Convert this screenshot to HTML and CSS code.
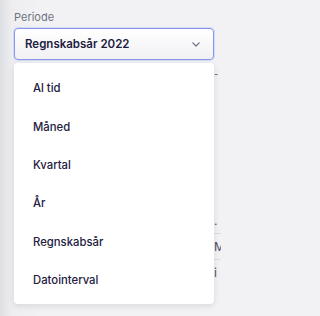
FILE: index.html
```html
<!DOCTYPE html>
<html lang="da">
<head>
<meta charset="utf-8">
<link rel="stylesheet" href="styles.css">
</head>
<body>
<div class="page">
  <div class="field">
    <div class="label">Periode</div>
    <div class="select-wrap">
      <div class="select">
        <span class="value">Regnskabsår 2022</span>
        <svg class="chev" width="8" height="5" viewBox="0 0 8 5"><path d="M0.8 0.8 L4 4 L7.2 0.8" fill="none" stroke="#6d7080" stroke-width="1.2" stroke-linecap="round" stroke-linejoin="round"/></svg>
      </div>
      <ul class="menu">
        <li class="item">Al tid</li>
        <li class="item">Måned</li>
        <li class="item">Kvartal</li>
        <li class="item">År</li>
        <li class="item">Regnskabsår</li>
        <li class="item">Datointerval</li>
      </ul>
    </div>
  </div>
  <div class="bg">
    <div class="bg-row first"><span class="bg-cell">-</span></div>
    <div class="bg-row tall"><span class="bg-cell">.</span></div>
    <div class="bg-row"><span class="bg-cell">M</span></div>
    <div class="bg-row"><span class="bg-cell">i</span></div>
  </div>
</div>
</body>
</html>
```
FILE: styles.css
```css
html, body {
  margin: 0;
  padding: 0;
}
body {
  width: 221px;
  height: 316px;
  overflow: hidden;
  font-family: Inter, "Noto Sans", sans-serif;
  background: linear-gradient(to right, #dedfe3 0px, #eeeef1 12px, #f2f2f4 40px, #f2f2f4 100%);
  color: #1d2040;
}
.page {
  padding: 10px 7px 0 14px;
}
.label {
  font-size: 11px;
  line-height: 14px;
  color: #6f7282;
}
.select-wrap {
  position: relative;
  margin-top: 4px;
}
.select {
  height: 32px;
  box-sizing: border-box;
  border: 1px solid #8399ef;
  box-shadow: 0 0 0 1px rgba(131, 153, 239, 0.25);
  border-radius: 4px;
  background: linear-gradient(#ffffff, #f1f1f4);
  display: flex;
  align-items: center;
  justify-content: space-between;
  padding: 0 13px 0 10px;
}
.value {
  font-size: 11.5px;
  font-weight: 600;
  color: #1d2040;
}
.chev {
  display: block;
  margin-top: 1px;
}
.menu {
  position: absolute;
  top: 35px;
  left: 0;
  width: 200px;
  margin: 0;
  padding: 6px 0 5px;
  list-style: none;
  background: #fff;
  border-radius: 4px;
  box-shadow: 0 2px 6px rgba(30, 32, 60, 0.12);
  z-index: 2;
}
.item {
  height: 38.4px;
  display: flex;
  align-items: center;
  padding-left: 19px;
  font-size: 11.3px;
  font-weight: 500;
  color: #1d2040;
}
.bg {
  margin-top: 12px;
  display: flex;
  flex-direction: column;
  align-items: flex-end;
  margin-right: -7px;
}
.bg-row {
  width: 8px;
  height: 25px;
  border-top: 1px solid #dcdde1;
  display: flex;
  align-items: center;
  font-size: 12px;
  color: #4b4e63;
}
.bg-row.first {
  border-top: none;
  height: 3px;
  font-size: 9px;
  margin-bottom: 133px;
}
.bg-row.tall {
  border-top: none;
}
.bg-cell {
  padding-left: 1px;
}
```
